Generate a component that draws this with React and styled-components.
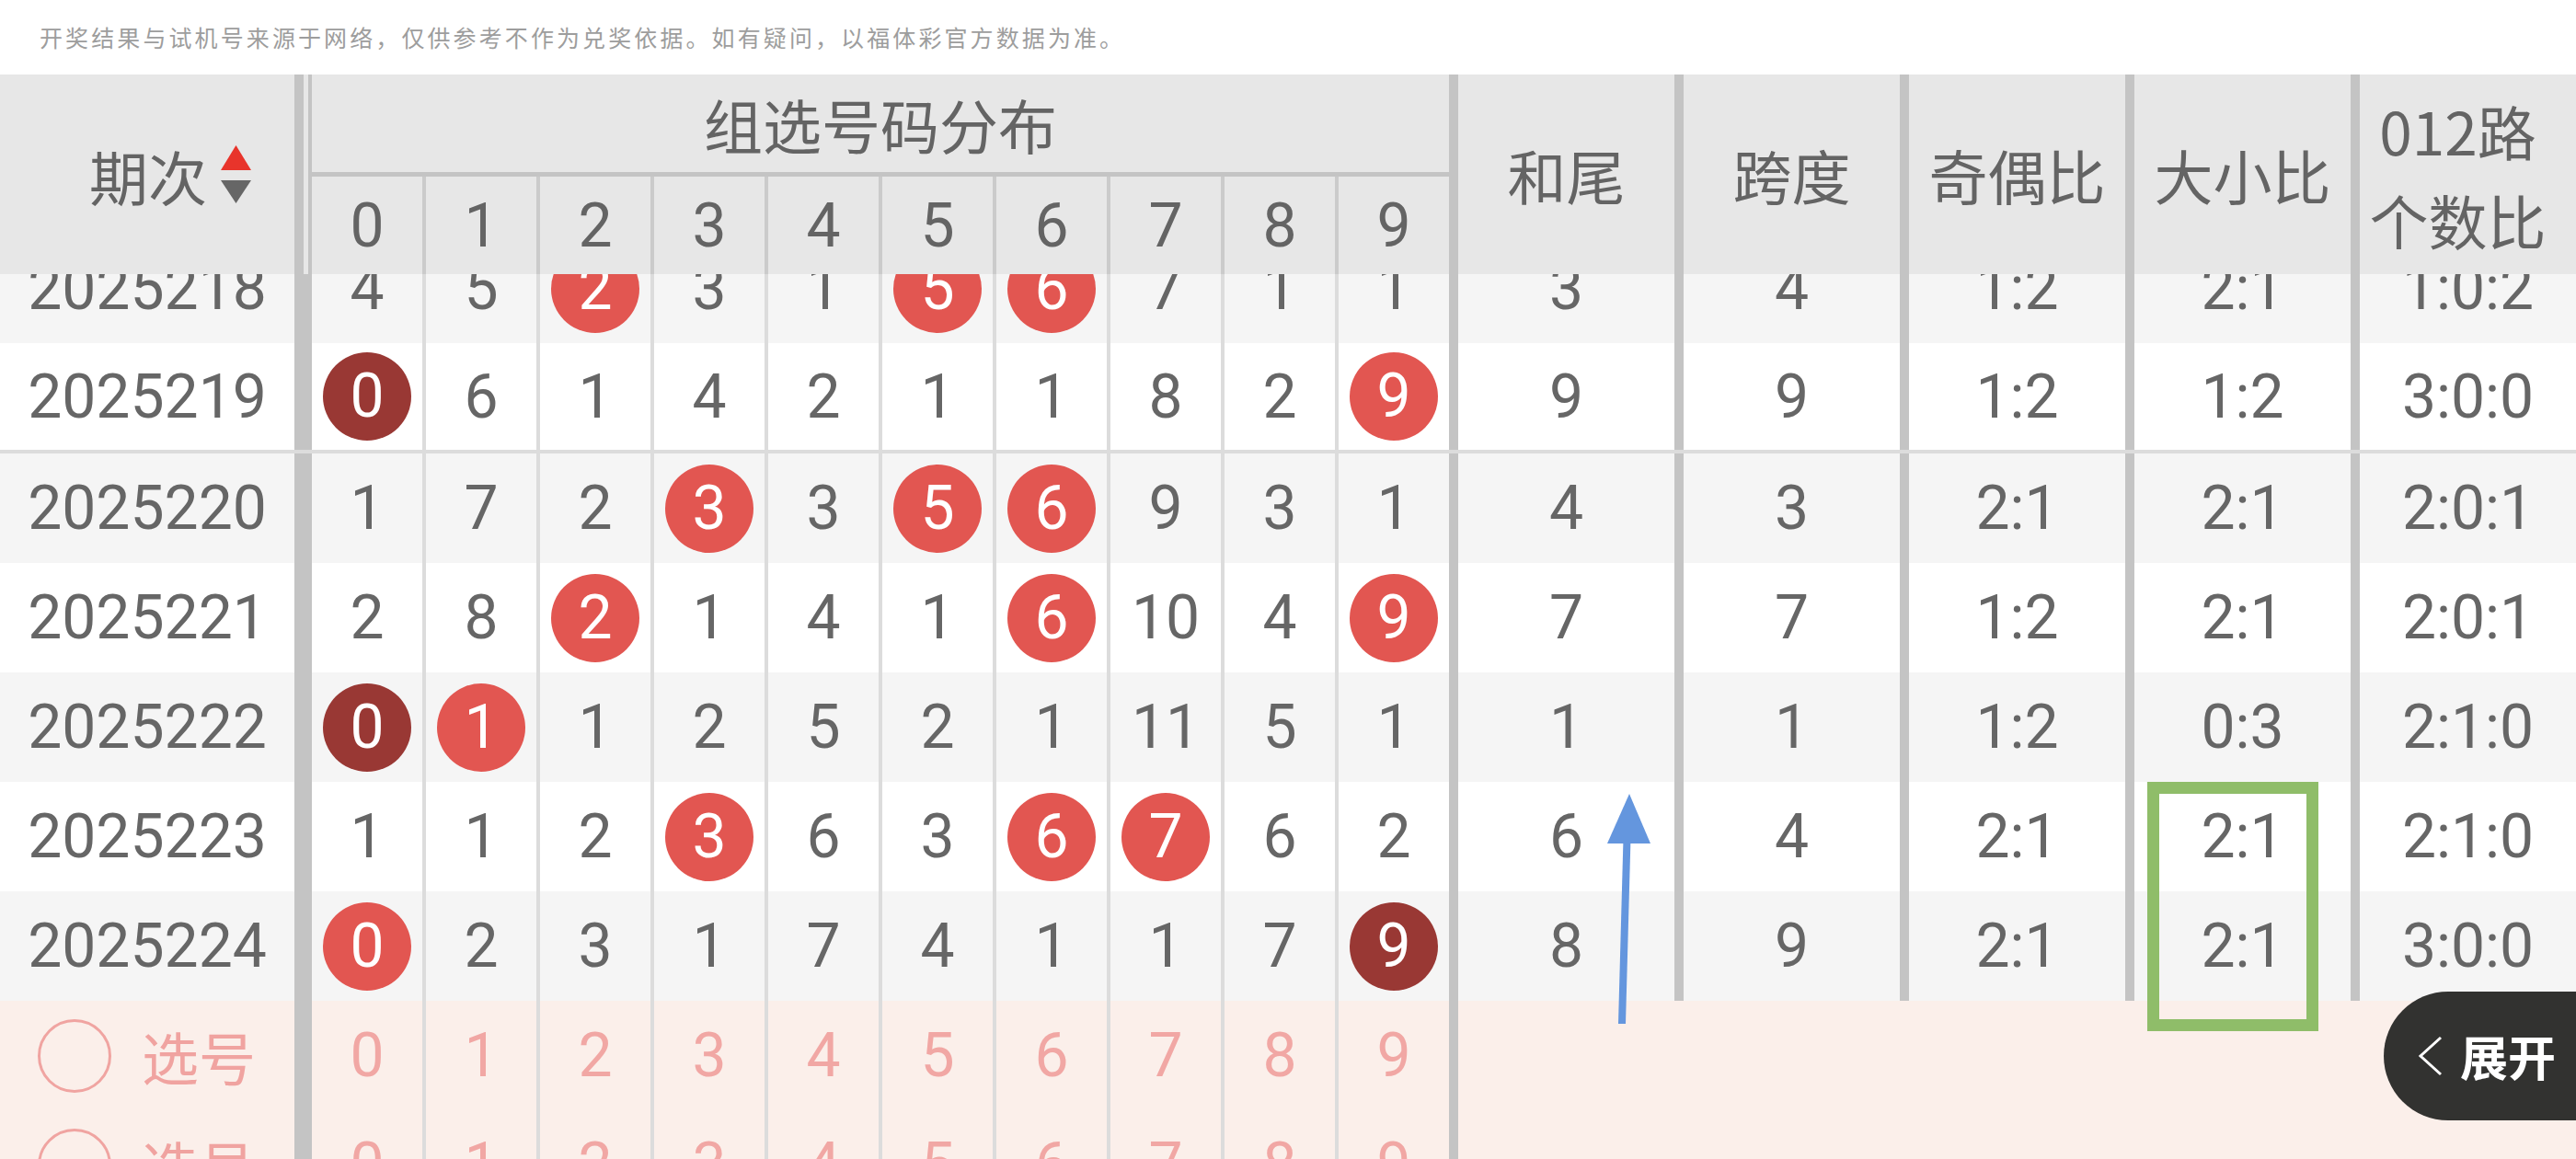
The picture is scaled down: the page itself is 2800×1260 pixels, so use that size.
import React from "react";
import styled, { createGlobalStyle } from "styled-components";

const CJK = `"Noto Sans CJK SC", "Noto Sans", sans-serif`;
const NUM = `Roboto, "Noto Sans CJK SC", sans-serif`;

const GlobalStyle = createGlobalStyle`
  html, body {
    margin: 0;
    padding: 0;
    background: #fff;
  }
  body {
    font-family: ${NUM};
  }
`;

const Page = styled.div`
  position: relative;
  width: 2800px;
  height: 1260px;
  overflow: hidden;
  display: flex;
  flex-direction: column;
  background: #fff;
`;

const Notice = styled.div`
  height: 81px;
  flex-shrink: 0;
  padding-left: 43px;
  font-family: ${CJK};
  font-size: 25px;
  letter-spacing: 3.1px;
  line-height: 81px;
  color: #9d9d9d;
  white-space: nowrap;
`;

const Head = styled.div`
  display: flex;
  height: 217px;
  flex-shrink: 0;
  background: #e7e7e7;
  color: #646464;
`;

const PeriodHead = styled.div`
  box-sizing: border-box;
  width: 330px;
  padding-left: 50px;
  border-right: 10px solid #c4c4c4;
  display: flex;
  align-items: center;
  justify-content: center;
  gap: 15px;
  font-family: ${CJK};
  font-size: 64px;
  line-height: 1;
`;

const DigitHead = styled.div`
  flex: 1;
  margin-left: 5px;
  border-left: 4px solid #c4c4c4;
  display: flex;
  flex-direction: column;
`;

const GroupTitle = styled.div`
  height: 106px;
  border-bottom: 5px solid #c4c4c4;
  display: flex;
  align-items: center;
  justify-content: center;
  font-family: ${CJK};
  font-size: 64px;
  line-height: 1;
`;

const LabelRow = styled.div`
  display: flex;
  height: 106px;
`;

const LabelCell = styled.div`
  flex: 1;
  display: flex;
  align-items: center;
  justify-content: center;
  border-left: 4px solid #cbcbcb;
  font-size: 66px;
  &:first-child {
    border-left: none;
  }
`;

const StatHead = styled.div`
  box-sizing: border-box;
  width: 245px;
  border-left: 10px solid #c4c4c4;
  padding-right: ${(p) => (p.$tight ? "22px" : "0")};
  display: flex;
  align-items: center;
  justify-content: center;
  text-align: center;
  font-family: ${CJK};
  font-size: 64px;
  line-height: 97px;
`;

const Body = styled.div`
  flex: 1;
  min-height: 0;
  overflow: hidden;
`;

const Rows = styled.div`
  margin-top: -44px;
  display: flex;
  flex-direction: column;
`;

const Row = styled.div`
  display: flex;
  box-sizing: border-box;
  height: ${(p) => (p.$end ? 120 : 119)}px;
  flex-shrink: 0;
  background: ${(p) => p.$bg};
  border-bottom: ${(p) => (p.$end ? "4px solid #dcdcdc" : "none")};
  color: ${(p) => (p.$pick ? "#f1a7a4" : "#666")};
  font-size: 66px;
`;

const PeriodCell = styled.div`
  box-sizing: border-box;
  width: 339px;
  flex-shrink: 0;
  border-right: 19px solid #c4c4c4;
  display: flex;
  align-items: center;
  justify-content: ${(p) => (p.$pick ? "flex-start" : "center")};
  padding-left: ${(p) => (p.$pick ? "41px" : "0")};
  gap: 33px;
`;

const PickRing = styled.span`
  box-sizing: border-box;
  width: 80px;
  height: 80px;
  border-radius: 50%;
  border: 3px solid #f0a4a1;
`;

const PickLabel = styled.span`
  font-family: ${CJK};
  font-size: 62px;
  line-height: 1;
  color: #f0a3a0;
`;

const DigitGroup = styled.div`
  flex: 1;
  display: flex;
`;

const DigitCell = styled.div`
  flex: 1;
  display: flex;
  align-items: center;
  justify-content: center;
  border-left: 4px solid #dcdcdc;
  &:first-child {
    border-left: none;
  }
`;

const Ball = styled.span`
  width: 96px;
  height: 96px;
  border-radius: 50%;
  background: ${(p) => (p.$dark ? "#993834" : "#e25651")};
  color: #fff;
  display: flex;
  align-items: center;
  justify-content: center;
  line-height: 1;
`;

const StatCell = styled.div`
  box-sizing: border-box;
  width: 245px;
  flex-shrink: 0;
  border-left: 10px solid #c4c4c4;
  display: flex;
  align-items: center;
  justify-content: center;
`;

const Filler = styled.div`
  box-sizing: border-box;
  width: 1225px;
  flex-shrink: 0;
  border-left: 10px solid #c4c4c4;
`;

const Highlight = styled.div`
  position: absolute;
  left: 2334px;
  top: 850px;
  width: 186px;
  height: 271px;
  box-sizing: border-box;
  border: 13px solid #8fbd69;
  pointer-events: none;
`;

const ArrowMark = styled.svg`
  position: absolute;
  left: 1735px;
  top: 855px;
`;

const ExpandButton = styled.div`
  position: absolute;
  right: 0;
  top: 1078px;
  width: 209px;
  height: 140px;
  box-sizing: border-box;
  padding-left: 35px;
  border-radius: 70px 0 0 70px;
  background: #323230;
  display: flex;
  align-items: center;
  gap: 18px;
  color: #fff;
  font-family: ${CJK};
  font-size: 52px;
  font-weight: 700;
  line-height: 1;
`;

const rows = [
  { no: "2025218", cells: [4, 5, 2, 3, 1, 5, 6, 7, 1, 1], hits: { 2: "r", 5: "r", 6: "r" }, stats: ["3", "4", "1:2", "2:1", "1:0:2"] },
  { no: "2025219", cells: [0, 6, 1, 4, 2, 1, 1, 8, 2, 9], hits: { 0: "d", 9: "r" }, stats: ["9", "9", "1:2", "1:2", "3:0:0"] },
  { no: "2025220", cells: [1, 7, 2, 3, 3, 5, 6, 9, 3, 1], hits: { 3: "r", 5: "r", 6: "r" }, stats: ["4", "3", "2:1", "2:1", "2:0:1"] },
  { no: "2025221", cells: [2, 8, 2, 1, 4, 1, 6, 10, 4, 9], hits: { 2: "r", 6: "r", 9: "r" }, stats: ["7", "7", "1:2", "2:1", "2:0:1"] },
  { no: "2025222", cells: [0, 1, 1, 2, 5, 2, 1, 11, 5, 1], hits: { 0: "d", 1: "r" }, stats: ["1", "1", "1:2", "0:3", "2:1:0"] },
  { no: "2025223", cells: [1, 1, 2, 3, 6, 3, 6, 7, 6, 2], hits: { 3: "r", 6: "r", 7: "r" }, stats: ["6", "4", "2:1", "2:1", "2:1:0"] },
  { no: "2025224", cells: [0, 2, 3, 1, 7, 4, 1, 1, 7, 9], hits: { 0: "r", 9: "d" }, stats: ["8", "9", "2:1", "2:1", "3:0:0"] },
];

const digits = [0, 1, 2, 3, 4, 5, 6, 7, 8, 9];

const SortIcon = () => (
  <svg width="33" height="64" viewBox="0 0 33 64">
    <polygon points="16.5,0 33,27 0,27" fill="#e8342b" />
    <polygon points="0,38 33,38 16.5,63" fill="#666" />
  </svg>
);

const App = () => {
  return (
    <Page>
      <GlobalStyle />
      <Notice>开奖结果与试机号来源于网络，仅供参考不作为兑奖依据。如有疑问，以福体彩官方数据为准。</Notice>

      <Head>
        <PeriodHead>
          期次
          <SortIcon />
        </PeriodHead>
        <DigitHead>
          <GroupTitle>组选号码分布</GroupTitle>
          <LabelRow>
            {digits.map((d) => (
              <LabelCell key={d}>{d}</LabelCell>
            ))}
          </LabelRow>
        </DigitHead>
        <StatHead>和尾</StatHead>
        <StatHead>跨度</StatHead>
        <StatHead>奇偶比</StatHead>
        <StatHead>大小比</StatHead>
        <StatHead $tight>
          012路
          <br />
          个数比
        </StatHead>
      </Head>

      <Body>
        <Rows>
          {rows.map((row, i) => (
            <Row key={row.no} $bg={i % 2 === 0 ? "#f5f5f5" : "#fff"} $end={row.no.endsWith("9")}>
              <PeriodCell>{row.no}</PeriodCell>
              <DigitGroup>
                {row.cells.map((v, j) => (
                  <DigitCell key={j}>
                    {row.hits[j] ? <Ball $dark={row.hits[j] === "d"}>{j}</Ball> : v}
                  </DigitCell>
                ))}
              </DigitGroup>
              {row.stats.map((s, k) => (
                <StatCell key={k}>{s}</StatCell>
              ))}
            </Row>
          ))}
          {[0, 1].map((n) => (
            <Row key={"pick" + n} $bg="#fbefea" $pick>
              <PeriodCell $pick>
                <PickRing />
                <PickLabel>选号</PickLabel>
              </PeriodCell>
              <DigitGroup>
                {digits.map((d) => (
                  <DigitCell key={d}>{d}</DigitCell>
                ))}
              </DigitGroup>
              <Filler />
            </Row>
          ))}
        </Rows>
      </Body>

      <ArrowMark width="70" height="265" viewBox="0 0 70 265">
        <line x1="28" y1="258" x2="33.5" y2="56" stroke="#6496de" strokeWidth="8" />
        <polygon points="36,8 59,62 12,62" fill="#6496de" />
      </ArrowMark>

      <Highlight />

      <ExpandButton>
        <svg width="30" height="44" viewBox="0 0 30 44">
          <polyline points="27,2 5,22 27,42" fill="none" stroke="#fff" strokeWidth="3" />
        </svg>
        展开
      </ExpandButton>
    </Page>
  );
};

export default App;
